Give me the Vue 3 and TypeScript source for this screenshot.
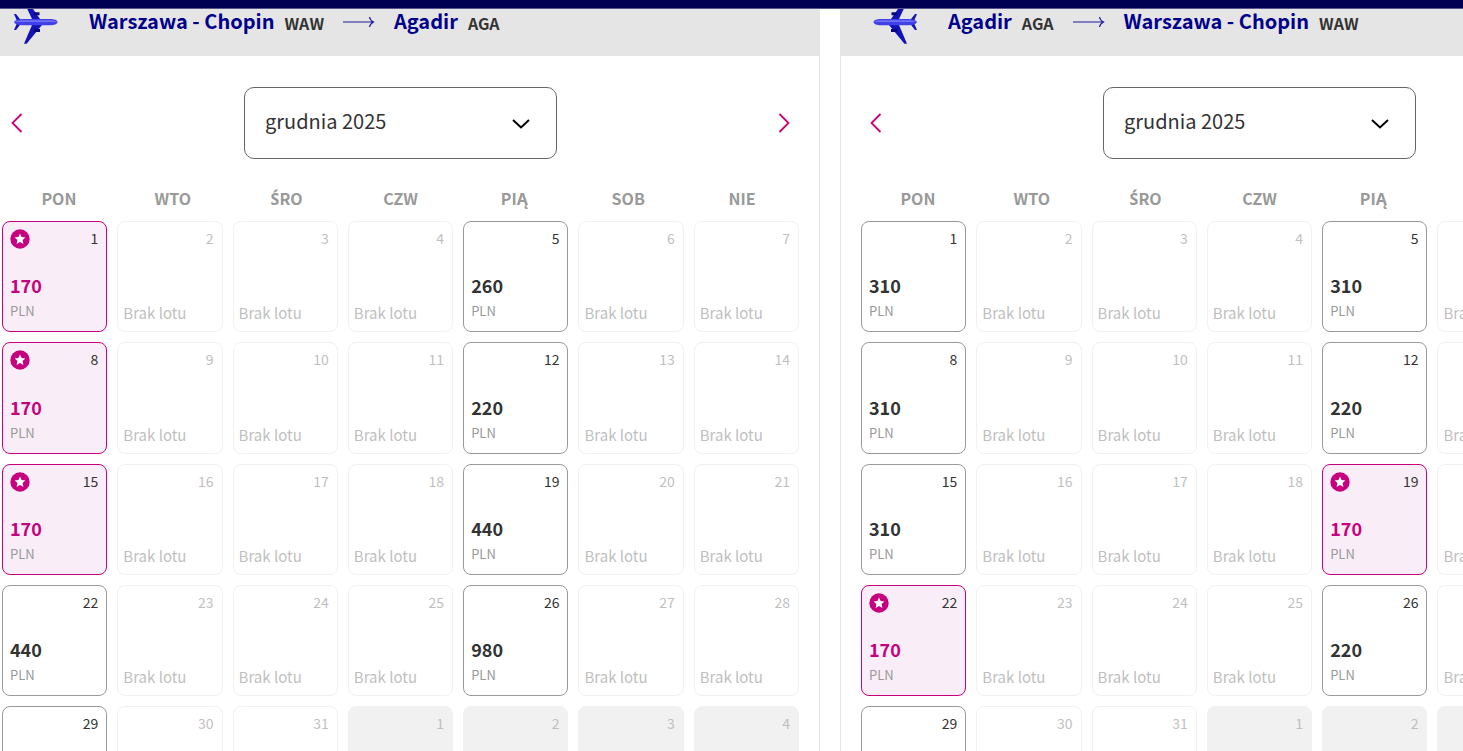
<script setup lang="ts">
interface Place {
  city: string
  code: string
}

interface Day {
  key: string
  label: number
  kind: 'flight' | 'none' | 'outside'
  price?: number
  best: boolean
}

interface Panel {
  id: string
  from: Place
  to: Place
  returning: boolean
  days: Day[]
}

const weekdays: string[] = ['PON', 'WTO', 'ŚRO', 'CZW', 'PIĄ', 'SOB', 'NIE']
const month = 'grudnia 2025'
const lowest = 170

function buildDays(prices: Record<number, number>): Day[] {
  return Array.from({ length: 35 }, (_, i): Day => {
    const n = i + 1
    if (n > 31) {
      return { key: `next-${n}`, label: n - 31, kind: 'outside', best: false }
    }
    const price = prices[n]
    const kind = price !== undefined || n === 29 ? 'flight' : 'none'
    return { key: `day-${n}`, label: n, kind, price, best: price === lowest }
  })
}

const warsaw: Place = { city: 'Warszawa - Chopin', code: 'WAW' }
const agadir: Place = { city: 'Agadir', code: 'AGA' }

const panels: Panel[] = [
  {
    id: 'outbound',
    from: warsaw,
    to: agadir,
    returning: false,
    days: buildDays({ 1: 170, 5: 260, 8: 170, 12: 220, 15: 170, 19: 440, 22: 440, 26: 980 }),
  },
  {
    id: 'inbound',
    from: agadir,
    to: warsaw,
    returning: true,
    days: buildDays({ 1: 310, 5: 310, 8: 310, 12: 220, 15: 310, 19: 170, 22: 170, 26: 220 }),
  },
]
</script>

<template>
  <main class="page">
    <div class="topbar"></div>
    <div class="panels">
      <section v-for="panel in panels" :key="panel.id" class="panel">
        <header class="route">
          <svg class="plane" :class="{ flipped: panel.returning }" viewBox="0 0 44 44" aria-hidden="true">
            <path d="M9.500 1h4L26 19l2 3v3L12.600 43.700H10L18 25v-6z" fill="#1212b8" />
            <path d="M0 14h2l5.500 7v2L2 30H0l3.500-8z" fill="#1212b8" />
            <path d="M19.500 12.300h6v3h-5.200zM20.500 29h5.500v3h-6.500z" fill="#08087a" />
            <path d="M0 22c1-2 4-3 9-3h27c4 0 7.500 1 7.500 3s-3.500 3.300-7.500 3.300H9c-5 0-8-1.200-9-3.300z" fill="#4040e8" />
            <path d="M1 22c2-1.300 5-1.800 9-1.800h25c4 0 6.500.6 8 1.800z" fill="#7070f4" />
          </svg>
          <h2 class="city">{{ panel.from.city }}</h2>
          <span class="code">{{ panel.from.code }}</span>
          <svg class="arrow" viewBox="0 0 32 12" aria-hidden="true">
            <path d="M0 6h30M26.500 1c.5 2.500 2 4 4 5-2 1-3.500 2.500-4 5" fill="none" stroke="#1c1c9c" stroke-width="1.200" />
          </svg>
          <h2 class="city">{{ panel.to.city }}</h2>
          <span class="code">{{ panel.to.code }}</span>
        </header>

        <div class="body">
          <div class="months">
            <button type="button" class="step" aria-label="‹">
              <svg viewBox="0 0 12 20" aria-hidden="true"><path d="M10.500 1 1.500 10l9 9" /></svg>
            </button>
            <div class="picker">
              <select :id="panel.id + '-month'" class="select" :aria-label="month">
                <option>{{ month }}</option>
              </select>
              <svg class="caret" viewBox="0 0 18 10" aria-hidden="true"><path d="m1 1 8 7.500L17 1" /></svg>
            </div>
            <button type="button" class="step" aria-label="›">
              <svg viewBox="0 0 12 20" aria-hidden="true"><path d="m1.500 1 9 9-9 9" /></svg>
            </button>
          </div>

          <div class="weekdays">
            <span v-for="name in weekdays" :key="name" :class="{ accented: name.startsWith('Ś') }">{{ name }}</span>
          </div>

          <div class="days">
            <button
              v-for="day in panel.days"
              :key="day.key"
              type="button"
              class="day"
              :class="[day.kind, { best: day.best }]"
              :disabled="day.kind !== 'flight'"
            >
              <span class="top">
                <svg v-if="day.best" class="badge" viewBox="0 0 20 20" aria-hidden="true">
                  <circle cx="10" cy="10" r="9.700" fill="#c6007e" />
                  <path d="m10 4.600 1.600 3.500 3.800.4-2.800 2.600.8 3.800-3.400-1.900-3.400 1.900.8-3.800-2.800-2.600 3.800-.4z" fill="#fff" />
                </svg>
                <span class="number">{{ day.label }}</span>
              </span>
              <span v-if="day.price" class="fare">
                <strong class="price">{{ day.price }}</strong>
                <span class="currency">PLN</span>
              </span>
              <span v-else-if="day.kind === 'none'" class="empty">Brak lotu</span>
            </button>
          </div>
        </div>
      </section>
    </div>
  </main>
</template>

<style>
body {
  margin: 0;
  background: #fff;
}
</style>

<style scoped>
.page {
  position: relative;
  height: 100vh;
  overflow: hidden;
  font-family: "Noto Sans CJK SC", "Noto Sans", sans-serif;
  color: #333;
}

.topbar {
  position: absolute;
  z-index: 1;
  top: 0;
  left: 0;
  right: 0;
  height: 8px;
  background: #000052;
  border-bottom: 1px solid #55558c;
}

.panels {
  display: grid;
  grid-template-columns: 1fr 1fr;
  gap: 20px;
  width: calc(100% + 235px);
  margin-left: -19px;
}

.route {
  display: flex;
  align-items: center;
  box-sizing: border-box;
  height: 56px;
  padding: 0 33px 12px;
  background: #e5e5e5;
}

.plane {
  width: 44px;
  height: 44px;
  margin-right: 31px;
}

.plane.flipped {
  transform: scaleX(-1);
}

.city {
  margin: 0;
  padding-bottom: 2px;
  font-size: 20px;
  line-height: 28px;
  font-weight: 700;
  color: #00008c;
}

.code {
  margin-left: 10px;
  padding-top: 1px;
  font-size: 16px;
  line-height: 20px;
  font-weight: 700;
}

.arrow {
  width: 32px;
  height: 12px;
  margin: 0 19px;
}

.body {
  padding: 31px 20px 20px;
  border: 1px solid #e5e5e5;
  border-top: 0;
}

.months {
  display: flex;
  align-items: center;
  justify-content: space-between;
}

.step {
  display: flex;
  align-items: center;
  justify-content: center;
  width: 30px;
  height: 40px;
  padding: 0;
  border: 0;
  background: none;
}

.step svg {
  width: 12px;
  height: 20px;
  fill: none;
  stroke: #c6007e;
  stroke-width: 1.8;
}

.picker {
  position: relative;
  width: 313px;
}

.select {
  appearance: none;
  display: block;
  box-sizing: border-box;
  width: 100%;
  height: 72px;
  padding: 0 60px 5px 20px;
  border: 1px solid #666;
  border-radius: 10px;
  background: #fff;
  font-family: inherit;
  font-size: 20px;
  color: #333;
}

.caret {
  position: absolute;
  right: 27px;
  top: 32px;
  width: 18px;
  height: 10px;
  fill: none;
  stroke: #000;
  stroke-width: 2;
  pointer-events: none;
}

.weekdays {
  display: grid;
  grid-template-columns: repeat(7, 1fr);
  height: 20px;
  margin: 29px 0 13px;
  font-size: 16px;
  line-height: 20px;
  font-weight: 700;
  text-align: center;
  color: #999;
}

.accented::first-letter {
  font-family: "Noto Sans", sans-serif;
}

.days {
  display: grid;
  grid-template-columns: repeat(7, 1fr);
  gap: 10px;
}

.day {
  display: flex;
  flex-direction: column;
  justify-content: space-between;
  box-sizing: border-box;
  aspect-ratio: 35 / 37;
  padding: 7px 8px 8px 7px;
  border: 1px solid #f1f1f1;
  border-radius: 8px;
  background: #fff;
  font-family: inherit;
  text-align: left;
  color: #bfbfbf;
}

.day.flight {
  border-color: #999;
  color: #333;
}

.day.best {
  border-color: #c6007e;
  background: #f9eef7;
}

.day.outside {
  background: #f1f1f1;
}

.top {
  display: flex;
  align-items: flex-start;
  width: 100%;
  height: 20px;
}

.badge {
  width: 20px;
  height: 20px;
}

.number {
  margin-left: auto;
  font-size: 14px;
  line-height: 18px;
}

.fare {
  display: flex;
  flex-direction: column;
}

.price {
  font-size: 18px;
  line-height: 28px;
  font-weight: 700;
}

.best .price {
  color: #c6007e;
}

.currency {
  font-size: 13px;
  line-height: 24px;
  color: #999;
}

.empty {
  margin-left: -2px;
  font-size: 15px;
  line-height: 20px;
}
</style>
